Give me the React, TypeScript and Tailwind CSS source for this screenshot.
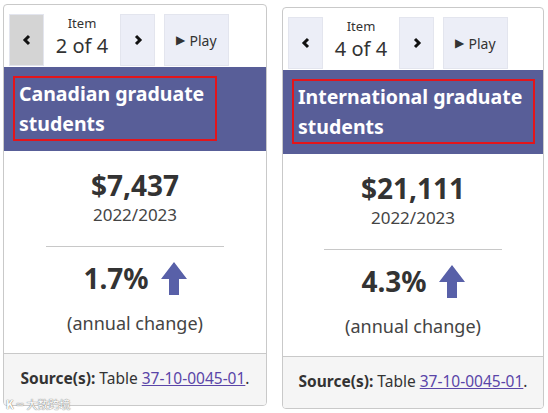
import React from "react";

const FONT = { fontFamily: '"Noto Sans", "Open Sans", sans-serif' };

function ChevLeft() {
  return (
    <svg width="10" height="12" viewBox="0 0 10 12">
      <path d="M7 2 L3 6 L7 10" fill="none" stroke="#111" strokeWidth="3" strokeLinejoin="miter" />
    </svg>
  );
}
function ChevRight() {
  return (
    <svg width="10" height="12" viewBox="0 0 10 12">
      <path d="M3 2 L7 6 L3 10" fill="none" stroke="#111" strokeWidth="3" strokeLinejoin="miter" />
    </svg>
  );
}
function UpArrow() {
  return (
    <svg width="26" height="33" viewBox="0 0 26 33">
      <polygon points="13,0 26,17 18,17 18,33 8,33 8,17 0,17" fill="#5860a8" />
    </svg>
  );
}

type CardProps = {
  item: string;
  prevPressed: boolean;
  title1: string;
  title2: string;
  amount: string;
  pct: string;
  extra?: string;
};

function Card({ item, prevPressed, title1, title2, amount, pct, extra = "" }: CardProps) {
  return (
    <div className={`flex flex-col border border-[#c9c9c9] rounded-[4px] bg-white overflow-hidden h-[402px] ${extra}`}>
      {/* nav */}
      <div className="flex h-[62px] pt-[9px] pb-[1px] pl-[5px]">
        <div className={`w-[35px] h-[52px] flex items-center justify-center border border-[#e3e5ee] ${prevPressed ? "bg-[#d4d4d4]" : "bg-[#eceef7]"}`}>
          <ChevLeft />
        </div>
        <div className="w-[76px] h-[52px] flex flex-col items-center text-[#333]">
          <div className="text-[13px] leading-[16px] mt-[1px]">Item</div>
          <div className="text-[20px] leading-[26px] mt-[2px]">{item}</div>
        </div>
        <div className="w-[35px] h-[52px] flex items-center justify-center border border-[#e3e5ee] bg-[#eceef7]">
          <ChevRight />
        </div>
        <div className="ml-[9px] w-[65px] h-[52px] flex items-center justify-center gap-[4px] border border-[#e3e5ee] bg-[#eceef7] text-[#333] text-[14px]">
          <span className="text-[12px]">▶</span>
          <span>Play</span>
        </div>
      </div>
      {/* header */}
      <div className="h-[84px] bg-[#585e98] pt-[9px] pl-[9px]">
        <div className="inline-block border-2 border-[#e3151b] h-[65px] pl-[4px] pr-[11px] text-white font-bold text-[19.5px] leading-[30px] pt-[1px]">
          <div>{title1}</div>
          <div>{title2}</div>
        </div>
      </div>
      {/* body */}
      <div className="h-[202px] flex flex-col items-center text-[#333] pt-[17px]">
        <div className="text-[28px] leading-[34px] font-bold">{amount}</div>
        <div className="text-[17px] leading-[24px] mt-[1px] text-[#444]">2022/2023</div>
        <div className="w-[178px] h-px bg-[#c8c8c8] mt-[19px]" />
        <div className="flex items-center gap-[12px] mt-[14px] h-[34px]">
          <span className="text-[28px] leading-[34px] font-bold">{pct}</span>
          <UpArrow />
        </div>
        <div className="text-[18px] leading-[24px] mt-[16px] text-[#444]">(annual change)</div>
      </div>
      {/* footer */}
      <div className="flex-1 border-t border-[#c9c9c9] bg-[#f5f5f5] flex items-center justify-center text-[15.5px] text-[#333] pb-[2px]">
        <span className="font-bold">Source(s):</span>
        <span>&nbsp;Table&nbsp;</span>
        <span className="text-[#5a45a8] underline">37-10-0045-01</span>
        <span>.</span>
      </div>
    </div>
  );
}

export default function App() {
  return (
    <div className="relative w-[548px] h-[413px] bg-white overflow-hidden" style={FONT}>
      <div className="flex pl-[3px] pt-[4px] gap-[15px]">
        <div className="w-[264px]">
          <Card
            item="2 of 4"
            prevPressed={true}
            title1="Canadian graduate"
            title2="students"
            amount="$7,437"
            pct="1.7%"
          />
        </div>
        <div className="w-[262px]">
          <Card
            item="4 of 4"
            prevPressed={false}
            title1="International graduate"
            title2="students"
            amount="$21,111"
            pct="4.3%"
            extra="mt-[3px]"
          />
        </div>
      </div>
      <div
        className="absolute left-[6px] top-[398px] flex items-center gap-[3px] text-white text-[11px] leading-[12px] [text-shadow:0_0_1px_#777,0_0_1px_#777]"
        style={{ fontFamily: '"Noto Sans CJK SC", sans-serif' }}
      >
        <span className="font-bold">K</span>
        <span className="text-[7px]">∞</span>
        <span>大数跨境</span>
      </div>
    </div>
  );
}
